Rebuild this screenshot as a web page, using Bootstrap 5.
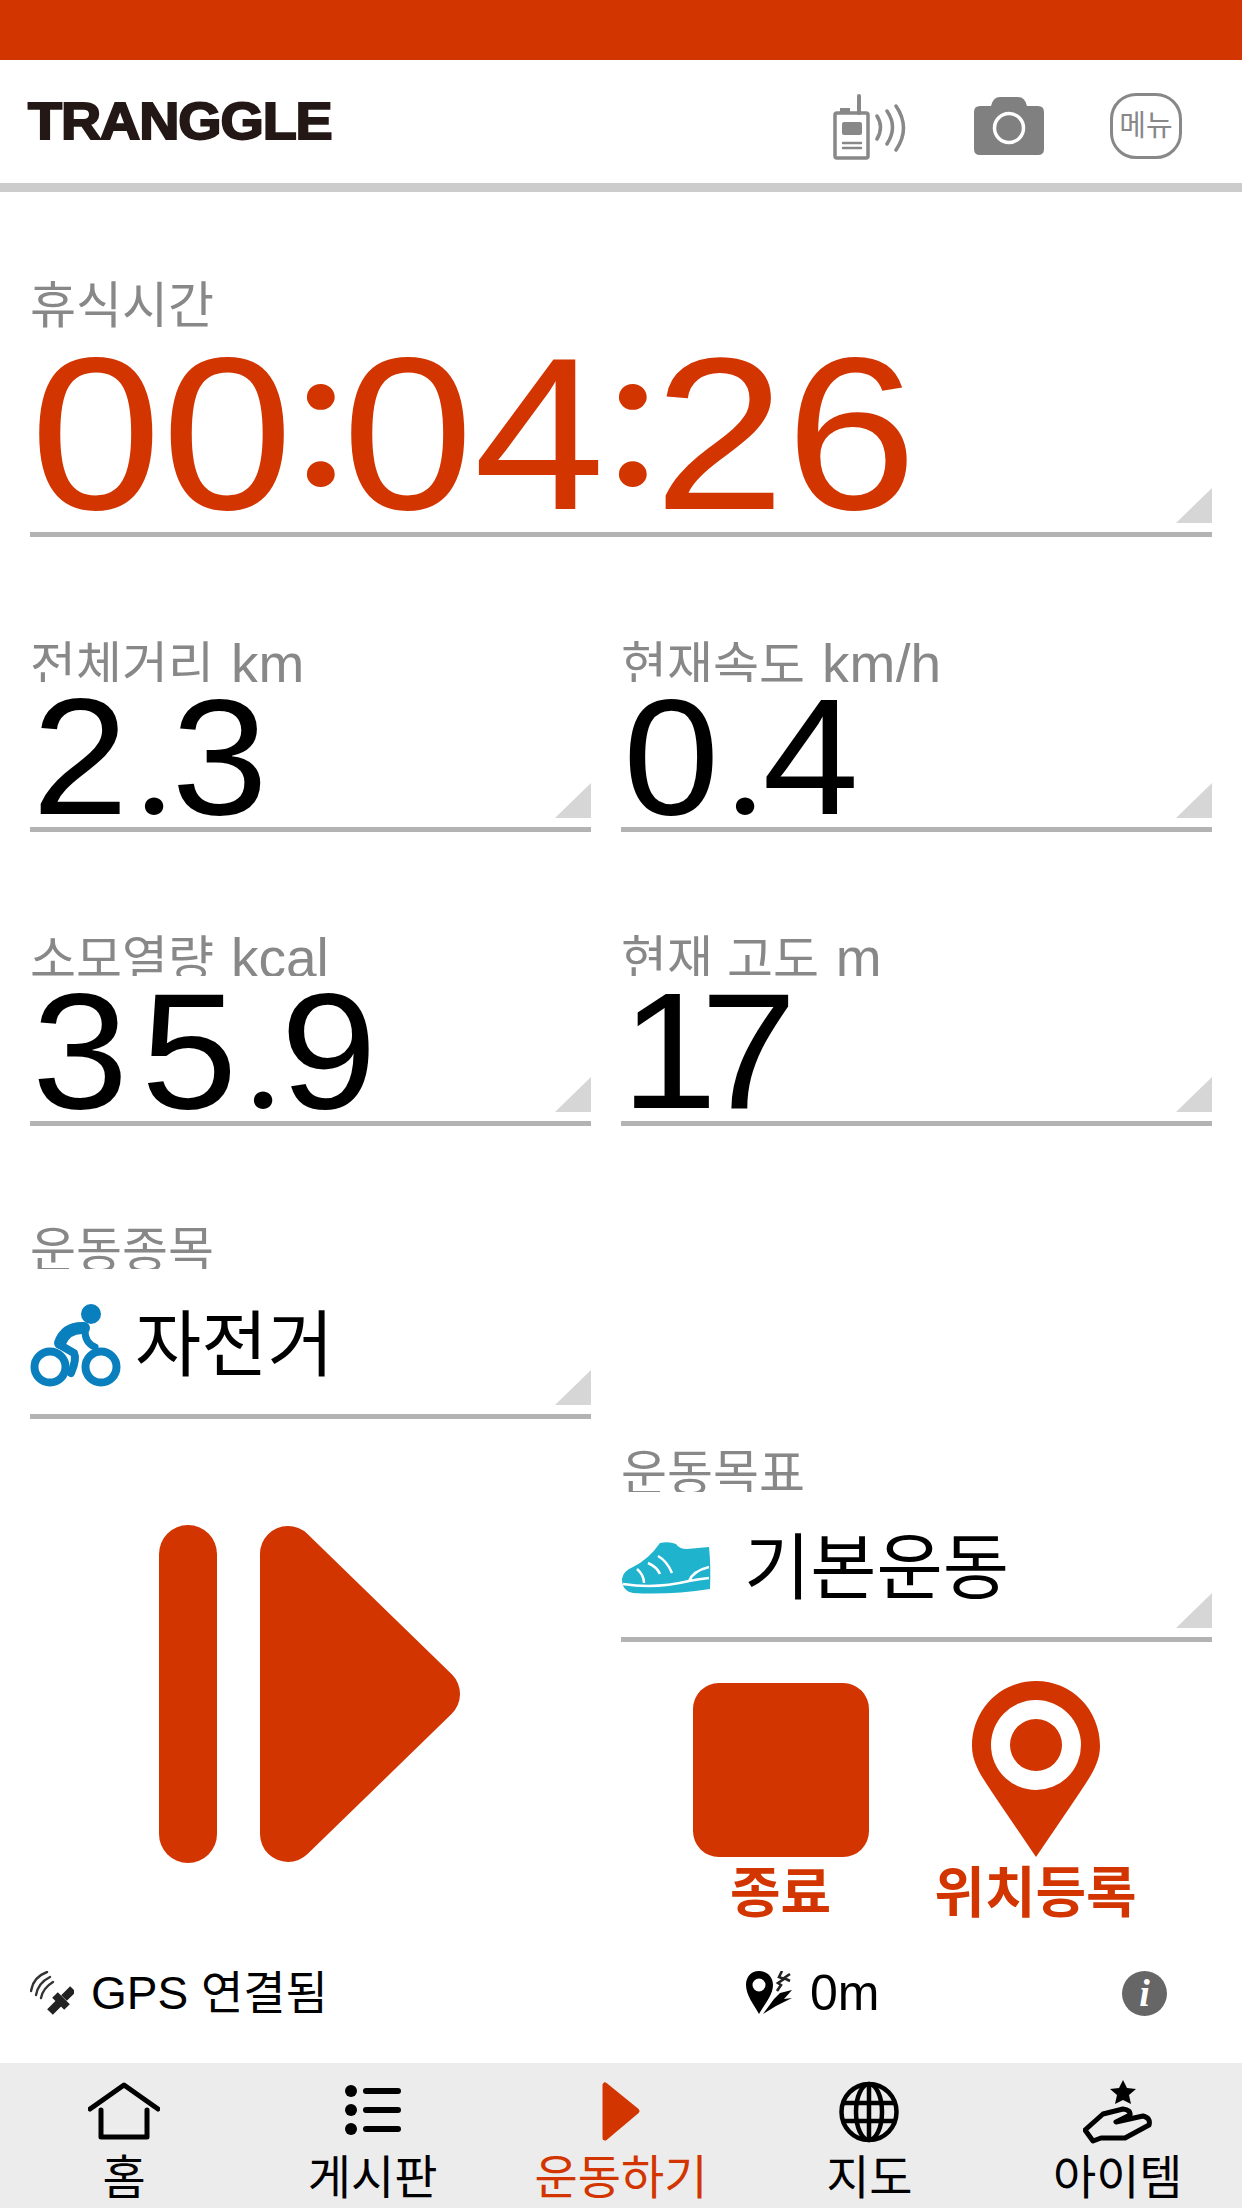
<!DOCTYPE html>
<html lang="ko">

<head>
    <meta charset="UTF-8">
    <meta name="viewport" content="width=device-width, initial-scale=1.0">
    <title>Tranggle</title>
    <link href="https://cdn.jsdelivr.net/npm/bootstrap@5.3.0/dist/css/bootstrap.min.css" rel="stylesheet">
    <style>
        html, body {
            margin: 0;
            height: 2208px;
            overflow: hidden;
            background-color: #fff;
            font-family: "Liberation Sans", "Noto Sans CJK KR", sans-serif;
        }

        .topbar { height: 60px; background-color: #d23500; }

        .appbar {
            height: 132px;
            padding: 9px 60px 0 28px;
            border-bottom: 9px solid #ccc;
        }

        .logo {
            font-weight: 700;
            font-size: 52px;
            line-height: 1;
            color: #231815;
            -webkit-text-stroke: 2px #231815;
            letter-spacing: -1px;
            transform: scaleX(1.07);
            transform-origin: left;
            padding-bottom: 10px;
        }

        .menu-btn {
            width: 72px;
            height: 66px;
            margin-left: 66px;
            border: 3px solid #888;
            border-radius: 26px;
            color: #888;
            font-size: 29px;
            line-height: 1;
        }

        .cam-icon { margin-left: 64px; }

        .content { height: 1871px; padding: 78px 30px 0; }

        .field {
            height: 202px;
            border-bottom: 5px solid #b3b3b3;
        }

        .field-timer { height: 267px; margin-bottom: 93px; }

        .field-label {
            height: 52px;
            font-size: 50px;
            line-height: 69px;
            color: #888;
            overflow: hidden;
            white-space: nowrap;
        }

        .field-timer .field-label { height: 60px; line-height: 72px; }

        .unit { font-size: 55px; margin-left: 3px; }

        .timer-value {
            width: fit-content;
            font-size: 218px;
            line-height: 200px;
            color: #d23500;
            margin-top: 4px;
            white-space: nowrap;
            transform: scaleX(1.085);
            transform-origin: left;
        }

        .timer-colon {
            display: inline-block;
            width: 45px;
            text-align: center;
            font-family: Lato, sans-serif;
            font-size: 205px;
            line-height: 0;
            vertical-align: 24px;
        }

        .metric-value {
            width: fit-content;
            font-size: 165px;
            line-height: 140px;
            letter-spacing: 12px;
            color: #000;
            margin-top: 5px;
            padding-left: 2px;
            white-space: nowrap;
            transform: scaleX(1.05);
            transform-origin: left;
        }

        .metric-dot {
            font-family: Lato, sans-serif;
            font-size: 140px;
            letter-spacing: 0;
            margin-left: -4px;
        }

        .value-tight { letter-spacing: -16px; padding-left: 0; }

        .text-value {
            font-size: 72px;
            line-height: 90px;
            color: #000;
            margin-top: 31px;
        }

        .corner {
            position: absolute;
            right: 0;
            bottom: 9px;
            width: 0;
            height: 0;
            border-style: solid;
            border-width: 0 0 35px 36px;
            border-color: transparent transparent #d6d6d6 transparent;
        }

        .metric-row { display: flex; gap: 30px; margin-bottom: 92px; }
        .metric-row.last-row { margin-bottom: 91px; }
        .metric-col { width: 561px; }
        .metric-col.right-col { width: 591px; }

        .sport-icon { margin-right: 14px; }
        .goal-icon { margin-right: 33px; }

        .lower { display: flex; gap: 30px; height: 746px; }
        .play-btn { margin: 106px 0 0 129px; display: block; }
        .goal-slot { padding-top: 223px; }

        .actions { padding: 39px 0 0 32px; }
        .action { width: 255px; }
        .stop-shape {
            width: 176px;
            height: 174px;
            margin-top: 2px;
            border-radius: 26px;
            background-color: #d23500;
        }

        .action-label {
            font-size: 55px;
            line-height: 50px;
            font-weight: 700;
            color: #d23500;
            margin-top: 11px;
        }

        .status {
            height: 60px;
            font-size: 46px;
            color: #000;
        }

        .status-gps { width: 716px; }
        .status-dist { width: 376px; }
        .status-gps svg { margin-right: 17px; }
        .status-dist svg { margin-right: 18px; }
        .status-dist span { font-size: 50px; }

        .info-dot {
            width: 45px;
            height: 45px;
            border-radius: 50%;
            background-color: #666;
            color: #fff;
            font-family: "Liberation Serif", serif;
            font-style: italic;
            font-weight: 700;
            font-size: 38px;
            line-height: 45px;
        }

        .tabbar {
            height: 145px;
            background-color: #ececec;
        }

        .tab { width: 20%; padding-top: 17px; }
        .tab svg { display: block; height: 64px; }
        .tab-label {
            font-size: 47px;
            line-height: 56px;
            color: #000;
            white-space: nowrap;
            margin-top: 6px;
        }

        .tab-active .tab-label { color: #d23500; }
    </style>
</head>

<body>
    <div class="topbar"></div>

    <!-- Cabecalho -->
    <div class="appbar d-flex align-items-center justify-content-between">
        <div class="logo">TRANGGLE</div>
        <div class="d-flex align-items-center">
            <svg width="80" height="70" viewBox="0 0 80 70" fill="none" stroke="#888" stroke-width="3.5" stroke-linecap="round">
                <rect x="5" y="22" width="33" height="45" rx="2"/>
                <path d="M29 5V22" stroke-width="4"/>
                <rect x="10" y="17" width="10" height="5" fill="#888" stroke="none"/>
                <rect x="12" y="31" width="20" height="13" rx="2" fill="#888" stroke="none"/>
                <path d="M13 52H31M13 57H31" stroke-width="2.5"/>
                <path d="M47 25Q54 36 47 48M57 20Q68 36 57 53M66 15Q81 37 66 59"/>
            </svg>
            <svg class="cam-icon" width="70" height="58" viewBox="0 0 70 58">
                <path d="M6 9H17Q19 0 26 0H44Q51 0 53 9H64Q70 9 70 15V52Q70 58 64 58H6Q0 58 0 52V15Q0 9 6 9Z" fill="#808080"/>
                <circle cx="35" cy="31" r="14.5" fill="none" stroke="#fff" stroke-width="3.5"/>
            </svg>
            <div class="menu-btn d-flex align-items-center justify-content-center">메뉴</div>
        </div>
    </div>

    <div class="content">
        <!-- Tempo de descanso -->
        <div class="field field-timer position-relative">
            <div class="field-label">휴식시간</div>
            <div class="timer-value">00<span class="timer-colon">:</span>04<span class="timer-colon">:</span>26</div>
            <span class="corner"></span>
        </div>

        <div class="metric-row">
            <div class="field metric-col position-relative">
                <div class="field-label">전체거리 <span class="unit">km</span></div>
                <div class="metric-value">2<span class="metric-dot">.</span>3</div>
                <span class="corner"></span>
            </div>
            <div class="field metric-col right-col position-relative">
                <div class="field-label">현재속도 <span class="unit">km/h</span></div>
                <div class="metric-value">0<span class="metric-dot">.</span>4</div>
                <span class="corner"></span>
            </div>
        </div>

        <div class="metric-row last-row">
            <div class="field metric-col position-relative">
                <div class="field-label">소모열량 <span class="unit">kcal</span></div>
                <div class="metric-value">35<span class="metric-dot">.</span>9</div>
                <span class="corner"></span>
            </div>
            <div class="field metric-col right-col position-relative">
                <div class="field-label">현재 고도 <span class="unit">m</span></div>
                <div class="metric-value value-tight">17</div>
                <span class="corner"></span>
            </div>
        </div>

        <div class="lower">
            <div class="metric-col">
                <div class="field position-relative">
                    <div class="field-label">운동종목</div>
                    <div class="text-value d-flex align-items-center">
                        <svg class="sport-icon" width="91" height="88" viewBox="0 0 91 88" fill="none" stroke="#0a7fbd" stroke-linecap="round">
                            <circle cx="20" cy="66" r="15.5" stroke-width="8"/>
                            <circle cx="71" cy="66" r="15.5" stroke-width="8"/>
                            <circle cx="61" cy="13" r="10" fill="#0a7fbd" stroke="none"/>
                            <path d="M54 27Q36 26 30 42" stroke-width="12"/>
                            <path d="M30 44L44 52Q47 58 41 72" stroke-width="8"/>
                            <path d="M55 30Q55 42 65 46" stroke-width="7"/>
                        </svg>
                        <span>자전거</span>
                    </div>
                    <span class="corner"></span>
                </div>
                <svg class="play-btn" width="301" height="338" viewBox="0 0 301 338">
                    <rect width="58" height="338" rx="29" fill="#d23500"/>
                    <path d="M129 29V309L273 169Z" fill="#d23500" stroke="#d23500" stroke-width="56" stroke-linejoin="round"/>
                </svg>
            </div>

            <div class="metric-col right-col goal-slot">
                <div class="field position-relative">
                    <div class="field-label">운동목표</div>
                    <div class="text-value d-flex align-items-center">
                        <svg class="goal-icon" width="90" height="54" viewBox="0 0 90 54">
                            <path d="M39 2Q48 0 55 3Q58 8 66 8L88 6Q90 25 89 48Q50 54 12 52Q1 50 1 38Q2 30 12 26Q28 18 39 2Z" fill="#1fb3cd"/>
                            <path d="M2 43Q35 48 68 40Q78 38 88 37M68 40Q72 30 88 26M37 15Q46 20 51 32M27 22Q36 26 39 33M16 28Q23 34 23 42" fill="none" stroke="#fff" stroke-width="2.5"/>
                        </svg>
                        <span>기본운동</span>
                    </div>
                    <span class="corner"></span>
                </div>
                <div class="actions d-flex">
                    <div class="action d-flex flex-column align-items-center">
                        <div class="stop-shape"></div>
                        <div class="action-label">종료</div>
                    </div>
                    <div class="action d-flex flex-column align-items-center">
                        <svg width="128" height="176" viewBox="0 0 128 176">
                            <path d="M64 0C100 0 128 29 128 65C128 85 115 100 98 126L64 176L30 126C13 100 0 85 0 65C0 29 28 0 64 0Z" fill="#d23500"/>
                            <circle cx="64" cy="64" r="45" fill="#fff"/>
                            <circle cx="64" cy="64" r="26" fill="#d23500"/>
                        </svg>
                        <div class="action-label">위치등록</div>
                    </div>
                </div>
            </div>
        </div>

        <!-- Estado GPS -->
        <div class="status d-flex align-items-center">
            <div class="status-gps d-flex align-items-center">
                <svg width="44" height="44" viewBox="0 0 44 44" fill="none" stroke="#333" stroke-linecap="round">
                    <path d="M1 20Q3 6 17 1M6 24Q8 12 20 6M11 27Q13 17 23 11" stroke-width="2.4"/>
                    <path d="M20 41L30 31M34 27L43 18" stroke="#222" stroke-width="8" stroke-linecap="butt"/>
                    <path d="M25 24L37 36" stroke="#222" stroke-width="8" stroke-linecap="butt"/>
                </svg>
                <span>GPS 연결됨</span>
            </div>
            <div class="status-dist d-flex align-items-center">
                <svg width="46" height="44" viewBox="0 0 46 44">
                    <path d="M13 0C21 0 27 6 27 14C27 24 18 34 13 43C8 34 0 24 0 14C0 6 5 0 13 0Z" fill="#000"/>
                    <circle cx="13" cy="14" r="6.5" fill="#fff"/>
                    <path d="M17 43L28 28L34 22L46 19L38 28L46 27L30 35Z" fill="#000"/>
                    <path d="M36 0L33 6L38 8L32 12L35 14L31 20M44 3L38 7L44 10" fill="none" stroke="#222" stroke-width="2.6"/>
                </svg>
                <span>0m</span>
            </div>
            <div class="info-dot text-center">i</div>
        </div>
    </div>

    <!-- Menu inferior -->
    <div class="tabbar d-flex">
        <div class="tab d-flex flex-column align-items-center">
            <svg width="72" viewBox="0 0 72 64" fill="none" stroke="#000" stroke-width="5" stroke-linecap="round" stroke-linejoin="round">
                <path d="M2 29L36 5L70 29"/>
                <path d="M13 30V57H59V30"/>
            </svg>
            <div class="tab-label">홈</div>
        </div>
        <div class="tab d-flex flex-column align-items-center">
            <svg width="56" viewBox="0 0 56 64" fill="none" stroke="#000" stroke-width="6" stroke-linecap="round">
                <circle cx="6" cy="11" r="6" fill="#000" stroke="none"/>
                <circle cx="6" cy="30" r="6" fill="#000" stroke="none"/>
                <circle cx="6" cy="49" r="6" fill="#000" stroke="none"/>
                <path d="M21 11H53M21 30H53M21 49H53"/>
            </svg>
            <div class="tab-label">게시판</div>
        </div>
        <div class="tab tab-active d-flex flex-column align-items-center">
            <svg width="40" viewBox="0 0 40 64">
                <path d="M4 5V58L36 31Z" fill="#d23500" stroke="#d23500" stroke-width="5" stroke-linejoin="round"/>
            </svg>
            <div class="tab-label">운동하기</div>
        </div>
        <div class="tab d-flex flex-column align-items-center">
            <svg width="62" viewBox="0 0 62 64" fill="none" stroke="#000" stroke-width="4.5">
                <ellipse cx="31" cy="32" rx="27.5" ry="28"/>
                <ellipse cx="31" cy="32" rx="13" ry="28"/>
                <path d="M4 23H58M4 41H58M31 4V60"/>
            </svg>
            <div class="tab-label">지도</div>
        </div>
        <div class="tab d-flex flex-column align-items-center">
            <svg width="70" viewBox="0 0 70 64" fill="none" stroke="#000" stroke-width="5" stroke-linecap="round" stroke-linejoin="round">
                <path d="M40 0L44 8L53 9L46 15L48 24L40 20L32 24L34 15L27 9L36 8Z" fill="#000" stroke="none"/>
                <path d="M10 61L2 50L20 34L40 29Q48 30 47 35L33 42L60 36Q68 38 66 45L42 58L18 58Z"/>
            </svg>
            <div class="tab-label">아이템</div>
        </div>
    </div>

    <script src="https://cdn.jsdelivr.net/npm/bootstrap@5.3.0/dist/js/bootstrap.bundle.min.js"></script>
</body>

</html>
